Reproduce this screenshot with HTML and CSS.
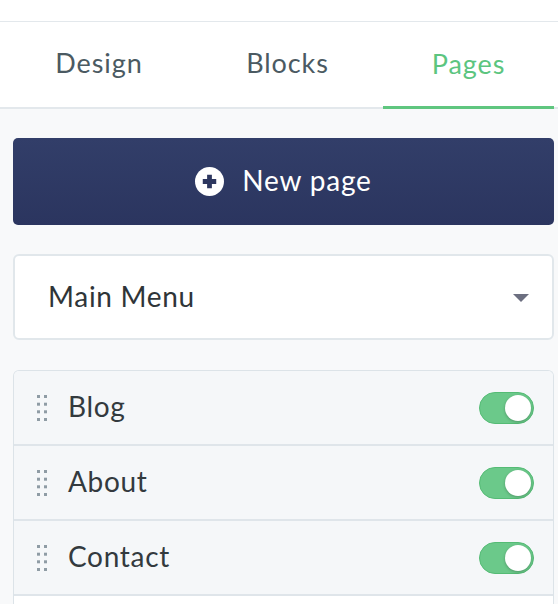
FILE: index.html
```html
<!DOCTYPE html>
<html lang="en">
<head>
<meta charset="utf-8">
<title>Pages panel</title>
<link rel="stylesheet" href="styles.css">
</head>
<body>
<div class="topbar"></div>
<nav class="tabs">
  <div class="tab">Design</div>
  <div class="tab">Blocks</div>
  <div class="tab active">Pages</div>
</nav>
<main class="content">
  <button class="new-page">
    <svg class="plus" width="29" height="29" viewBox="0 0 28 28">
      <circle cx="14" cy="14" r="14" fill="#fff"/>
      <path d="M14 7.5v13M7.5 14h13" stroke="#2d375f" stroke-width="4.6"/>
    </svg>
    <span>New page</span>
  </button>
  <div class="select">
    <span>Main Menu</span>
    <svg class="caret" width="16" height="8" viewBox="0 0 16 8"><path d="M0 0h16L8 8z" fill="#6c6f80"/></svg>
  </div>
  <ul class="pages">
    <li class="row">
      <svg class="grip" width="11" height="26" viewBox="0 0 11 26"><g fill="#8f9ca5"><rect x="0" y="0" width="3" height="3"/><rect x="7" y="0" width="3" height="3"/><rect x="0" y="7.7" width="3" height="3"/><rect x="7" y="7.7" width="3" height="3"/><rect x="0" y="15.3" width="3" height="3"/><rect x="7" y="15.3" width="3" height="3"/><rect x="0" y="23" width="3" height="3"/><rect x="7" y="23" width="3" height="3"/></g></svg>
      <span class="label">Blog</span>
      <span class="toggle"><span class="knob"></span></span>
    </li>
    <li class="row">
      <svg class="grip" width="11" height="26" viewBox="0 0 11 26"><g fill="#8f9ca5"><rect x="0" y="0" width="3" height="3"/><rect x="7" y="0" width="3" height="3"/><rect x="0" y="7.7" width="3" height="3"/><rect x="7" y="7.7" width="3" height="3"/><rect x="0" y="15.3" width="3" height="3"/><rect x="7" y="15.3" width="3" height="3"/><rect x="0" y="23" width="3" height="3"/><rect x="7" y="23" width="3" height="3"/></g></svg>
      <span class="label">About</span>
      <span class="toggle"><span class="knob"></span></span>
    </li>
    <li class="row">
      <svg class="grip" width="11" height="26" viewBox="0 0 11 26"><g fill="#8f9ca5"><rect x="0" y="0" width="3" height="3"/><rect x="7" y="0" width="3" height="3"/><rect x="0" y="7.7" width="3" height="3"/><rect x="7" y="7.7" width="3" height="3"/><rect x="0" y="15.3" width="3" height="3"/><rect x="7" y="15.3" width="3" height="3"/><rect x="0" y="23" width="3" height="3"/><rect x="7" y="23" width="3" height="3"/></g></svg>
      <span class="label">Contact</span>
      <span class="toggle"><span class="knob"></span></span>
    </li>
    <li class="row blank"></li>
  </ul>
</main>
</body>
</html>
```

FILE: styles.css
```css
* { box-sizing: border-box; }
html, body { margin: 0; padding: 0; }
body {
  background: #f8f9fa;
  font-family: Lato, "Noto Sans", sans-serif;
  width: 558px;
  height: 604px;
  overflow: hidden;
}
.topbar {
  height: 22px;
  background: #fff;
  border-bottom: 1px solid #e3e8ec;
}
.tabs {
  display: grid;
  grid-template-columns: 186px 184px 171px;
  column-gap: 3.5px;
  padding-left: 6px;
  height: 87px;
  background: #fff;
  border-bottom: 2px solid #e3e8ec;
}
.tab {
  display: flex;
  align-items: center;
  justify-content: center;
  font-size: 27px;
  color: #4b5a62;
  letter-spacing: 0.9px;
  padding-bottom: 4px;
}
.tab.active {
  color: #5cc57f;
  border-bottom: 3px solid #5fc67f;
  margin-bottom: -2px;
  padding-bottom: 2px;
}
.content {
  padding: 29px 4px 0 13px;
  display: flex;
  flex-direction: column;
  gap: 29px;
}
.new-page {
  height: 87px;
  border: none;
  border-radius: 5px;
  background: linear-gradient(#323e69, #2b355f);
  color: #fff;
  font-family: inherit;
  font-size: 28px;
  display: flex;
  align-items: center;
  justify-content: center;
  gap: 18px;
  padding: 0 0 3px 0;
  letter-spacing: 0.8px;
}
.plus { flex: none; margin-top: 3px; }
.select {
  height: 86px;
  background: #fff;
  border: 2px solid #e1e7eb;
  border-radius: 6px;
  display: flex;
  align-items: center;
  justify-content: space-between;
  padding: 0 23px 2px 33px;
  font-size: 28px;
  letter-spacing: 0.7px;
  color: #2f3538;
}
.caret { flex: none; margin-top: 4px; }
.pages {
  list-style: none;
  margin: 1px 0 0;
  padding: 0;
  border: 1px solid #dce3e8;
  border-bottom: none;
  border-radius: 6px 6px 0 0;
  overflow: hidden;
}
.row {
  height: 75px;
  display: flex;
  align-items: center;
  padding: 0 19px 0 23px;
  background: #f5f7f9;
  border-bottom: 2px solid #dfe5ea;
}
.row.blank { background: #fff; border-bottom: none; height: 9px; }
.grip { flex: none; margin-right: 20px; }
.label {
  flex: 1;
  font-size: 28px;
  color: #333a3e;
  letter-spacing: 0.7px;
  padding-bottom: 4px;
}
.toggle {
  flex: none;
  width: 55px;
  height: 32px;
  border-radius: 16px;
  background: #6bc98a;
  border: 1px solid #55bb75;
  position: relative;
}
.knob {
  position: absolute;
  top: 2px;
  right: 2px;
  width: 26px;
  height: 26px;
  border-radius: 50%;
  background: #fff;
  box-shadow: 0 1px 3px rgba(0, 0, 0, 0.25);
}
```
